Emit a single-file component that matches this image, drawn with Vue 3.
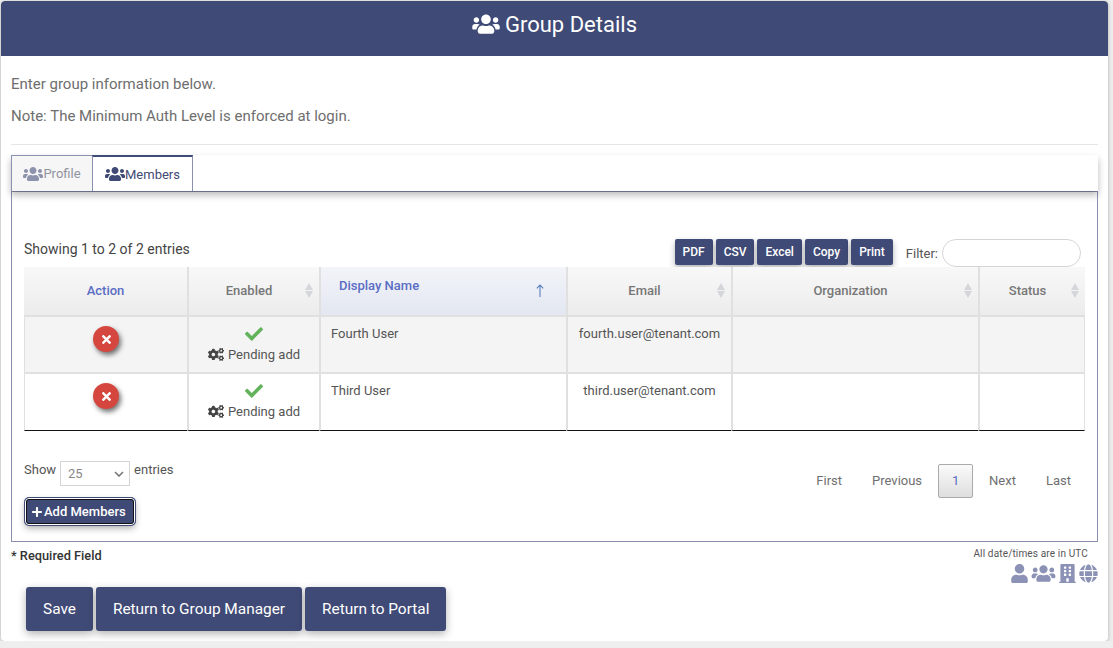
<script setup>
const usersPath = 'M96 224c35.3 0 64-28.7 64-64s-28.7-64-64-64-64 28.7-64 64 28.7 64 64 64zm448 0c35.3 0 64-28.7 64-64s-28.7-64-64-64-64 28.7-64 64 28.7 64 64 64zm32 32h-64c-17.6 0-33.5 7.1-45.1 18.6 40.3 22.1 68.9 62 75.1 109.4h66c17.7 0 32-14.3 32-32v-32c0-35.3-28.7-64-64-64zm-256 0c61.9 0 112-50.1 112-112S381.9 32 320 32 208 82.1 208 144s50.1 112 112 112zm76.8 32h-8.3c-20.8 10-43.9 16-68.5 16s-47.6-6-68.5-16h-8.3C179.6 288 128 339.6 128 403.2V432c0 26.5 21.5 48 48 48h288c26.5 0 48-21.5 48-48v-28.8c0-63.6-51.6-115.2-115.2-115.2zm-223.7-13.4C161.5 263.1 145.6 256 128 256H64c-35.3 0-64 28.7-64 64v32c0 17.7 14.3 32 32 32h65.9c6.3-47.4 34.9-87.3 75.2-109.4z'
const userPath = 'M224 256c70.7 0 128-57.3 128-128S294.7 0 224 0 96 57.3 96 128s57.3 128 128 128zm89.6 32h-16.7c-22.2 10.2-46.9 16-72.9 16s-50.6-5.8-72.9-16h-16.7C60.2 288 0 348.2 0 422.4V464c0 26.5 21.5 48 48 48h352c26.5 0 48-21.5 48-48v-41.6c0-74.2-60.2-134.4-134.4-134.4z'
const checkPath = 'M173.898 439.404l-166.4-166.4c-9.997-9.997-9.997-26.206 0-36.204l36.203-36.204c9.997-9.998 26.207-9.998 36.204 0L192 312.69 432.095 72.596c9.997-9.997 26.207-9.997 36.204 0l36.203 36.204c9.997 9.997 9.997 26.206 0 36.204l-294.4 294.401c-9.998 9.997-26.207 9.997-36.204-.001z'
const timesPath = 'M242.72 256l100.07-100.07c12.28-12.28 12.28-32.19 0-44.48l-22.24-22.24c-12.28-12.28-32.19-12.28-44.48 0L176 189.28 75.93 89.21c-12.28-12.28-32.19-12.28-44.48 0L9.21 111.45c-12.28 12.28-12.28 32.19 0 44.48L109.28 256 9.21 356.07c-12.28 12.28-12.28 32.19 0 44.48l22.24 22.24c12.28 12.28 32.2 12.28 44.48 0L176 322.72l100.07 100.07c12.28 12.28 32.2 12.28 44.48 0l22.24-22.24c12.28-12.28 12.28-32.19 0-44.48L242.72 256z'
const plusPath = 'M416 208H272V64c0-17.67-14.33-32-32-32h-32c-17.67 0-32 14.33-32 32v144H32c-17.67 0-32 14.33-32 32v32c0 17.67 14.33 32 32 32h144v144c0 17.67 14.33 32 32 32h32c17.67 0 32-14.33 32-32V304h144c17.67 0 32-14.33 32-32v-32c0-17.67-14.33-32-32-32z'
const buildingPath = 'M436 480h-20V24c0-13.255-10.745-24-24-24H56C42.745 0 32 10.745 32 24v456H12c-6.627 0-12 5.373-12 12v20h448v-20c0-6.627-5.373-12-12-12zM128 76c0-6.627 5.373-12 12-12h40c6.627 0 12 5.373 12 12v40c0 6.627-5.373 12-12 12h-40c-6.627 0-12-5.373-12-12V76zm0 96c0-6.627 5.373-12 12-12h40c6.627 0 12 5.373 12 12v40c0 6.627-5.373 12-12 12h-40c-6.627 0-12-5.373-12-12v-40zm52 148h-40c-6.627 0-12-5.373-12-12v-40c0-6.627 5.373-12 12-12h40c6.627 0 12 5.373 12 12v40c0 6.627-5.373 12-12 12zm76 160h-64v-84c0-6.627 5.373-12 12-12h40c6.627 0 12 5.373 12 12v84zm64-172c0 6.627-5.373 12-12 12h-40c-6.627 0-12-5.373-12-12v-40c0-6.627 5.373-12 12-12h40c6.627 0 12 5.373 12 12v40zm0-96c0 6.627-5.373 12-12 12h-40c-6.627 0-12-5.373-12-12v-40c0-6.627 5.373-12 12-12h40c6.627 0 12 5.373 12 12v40zm0-96c0 6.627-5.373 12-12 12h-40c-6.627 0-12-5.373-12-12V76c0-6.627 5.373-12 12-12h40c6.627 0 12 5.373 12 12v40z'
const globePath = 'M336.5 160C322 70.7 287.8 8 248 8s-74 62.7-88.5 152h177zM152 256c0 22.2 1.2 43.5 3.3 64h185.3c2.1-20.5 3.3-41.8 3.3-64s-1.2-43.5-3.3-64H155.3c-2.1 20.5-3.3 41.8-3.3 64zm324.7-96c-28.6-67.9-86.5-120.4-158-141.6 24.4 33.8 41.2 84.7 50 141.6h108zM177.2 18.4C105.8 39.6 47.8 92.1 19.3 160h108c8.7-56.9 25.5-107.8 49.9-141.6zM487.4 192H372.7c2.1 21 3.3 42.5 3.3 64s-1.2 43-3.3 64h114.6c5.5-20.5 8.6-41.8 8.6-64s-3.1-43.5-8.5-64zM120 256c0-21.5 1.2-43 3.3-64H8.6C3.2 212.5 0 233.8 0 256s3.2 43.5 8.6 64h114.6c-2-21-3.2-42.5-3.2-64zm39.5 96c14.5 89.3 48.7 152 88.5 152s74-62.7 88.5-152h-177zm159.3 141.6c71.4-21.2 129.4-73.7 158-141.6h-108c-8.8 56.9-25.6 107.8-50 141.6zM19.3 352c28.6 67.9 86.5 120.4 158 141.6-24.4-33.8-41.2-84.7-50-141.6h-108z'
const cogsPath = 'M512.1 191l-8.2 14.3c-3 5.3-9.4 7.5-15.1 5.4-11.8-4.4-22.6-10.7-32.1-18.6-4.6-3.8-5.8-10.5-2.8-15.7l8.2-14.3c-6.9-8-12.3-17.3-15.9-27.4h-16.5c-6 0-11.2-4.3-12.2-10.3-2-12-2.1-24.6 0-37.1 1-6 6.2-10.4 12.2-10.4h16.5c3.6-10.1 9-19.4 15.9-27.4l-8.2-14.3c-3-5.2-1.9-11.9 2.8-15.7 9.5-7.9 20.4-14.2 32.1-18.6 5.7-2.1 12.1.1 15.1 5.4l8.2 14.3c10.5-1.9 21.2-1.9 31.7 0L552 6.3c3-5.3 9.4-7.5 15.1-5.4 11.8 4.4 22.6 10.7 32.1 18.6 4.6 3.8 5.8 10.5 2.8 15.7l-8.2 14.3c6.9 8 12.3 17.3 15.9 27.4h16.5c6 0 11.2 4.3 12.2 10.3 2 12 2.1 24.6 0 37.1-1 6-6.2 10.4-12.2 10.4h-16.5c-3.6 10.1-9 19.4-15.9 27.4l8.2 14.3c3 5.2 1.9 11.9-2.8 15.7-9.5 7.9-20.4 14.2-32.1 18.6-5.7 2.1-12.1-.1-15.1-5.4l-8.2-14.3c-10.4 1.9-21.2 1.9-31.7 0zm-10.5-58.8c38.5 29.6 82.4-14.3 52.8-52.8-38.5-29.7-82.4 14.3-52.8 52.8zM386.3 286.1l33.7 16.8c10.1 5.8 14.5 18.1 10.5 29.1-8.9 24.2-26.4 46.4-42.6 65.8-7.4 8.9-20.2 11.1-30.3 5.3l-29.1-16.8c-16 13.7-34.6 24.6-54.9 31.7v33.6c0 11.6-8.3 21.6-19.7 23.6-24.6 4.2-50.4 4.4-75.9 0-11.5-2-20-11.9-20-23.6V418c-20.3-7.2-38.9-18-54.9-31.7L74 403c-10 5.8-22.9 3.6-30.3-5.3-16.2-19.4-33.3-41.6-42.2-65.7-4-10.9.4-23.2 10.5-29.1l33.3-16.8c-3.9-20.9-3.9-42.4 0-63.4L12 205.8c-10.1-5.8-14.6-18.1-10.5-29 8.9-24.2 26-46.4 42.2-65.8 7.4-8.9 20.2-11.1 30.3-5.3l29.1 16.8c16-13.7 34.6-24.6 54.9-31.7V57.1c0-11.5 8.2-21.5 19.6-23.5 24.6-4.2 50.5-4.4 76-.1 11.5 2 20 11.9 20 23.6v33.6c20.3 7.2 38.9 18 54.9 31.7l29.1-16.8c10-5.8 22.9-3.6 30.3 5.3 16.2 19.4 33.2 41.6 42.1 65.8 4 10.9.1 23.2-10 29.1l-33.7 16.8c3.9 21 3.9 42.5 0 63.5zm-117.6 21.1c59.2-77-28.7-164.9-105.7-105.7-59.2 77 28.7 164.9 105.7 105.7zm243.4 182.7l-8.2 14.3c-3 5.3-9.4 7.5-15.1 5.4-11.8-4.4-22.6-10.7-32.1-18.6-4.6-3.8-5.8-10.5-2.8-15.7l8.2-14.3c-6.9-8-12.3-17.3-15.9-27.4h-16.5c-6 0-11.2-4.3-12.2-10.3-2-12-2.1-24.6 0-37.1 1-6 6.2-10.4 12.2-10.4h16.5c3.6-10.1 9-19.4 15.9-27.4l-8.2-14.3c-3-5.2-1.9-11.9 2.8-15.7 9.5-7.9 20.4-14.2 32.1-18.6 5.7-2.1 12.1.1 15.1 5.4l8.2 14.3c10.5-1.9 21.2-1.9 31.7 0l8.2-14.3c3-5.3 9.4-7.5 15.1-5.4 11.8 4.4 22.6 10.7 32.1 18.6 4.6 3.8 5.8 10.5 2.8 15.7l-8.2 14.3c6.9 8 12.3 17.3 15.9 27.4h16.5c6 0 11.2 4.3 12.2 10.3 2 12 2.1 24.6 0 37.1-1 6-6.2 10.4-12.2 10.4h-16.5c-3.6 10.1-9 19.4-15.9 27.4l8.2 14.3c3 5.2 1.9 11.9-2.8 15.7-9.5 7.9-20.4 14.2-32.1 18.6-5.7 2.1-12.1-.1-15.1-5.4l-8.2-14.3c-10.4 1.9-21.2 1.9-31.7 0zM501.6 431c38.5 29.6 82.4-14.3 52.8-52.8-38.5-29.6-82.4 14.3-52.8 52.8z'

const rows = [
  { name: 'Fourth User', email: 'fourth.user@tenant.com' },
  { name: 'Third User', email: 'third.user@tenant.com' },
]
const exportsList = ['PDF', 'CSV', 'Excel', 'Copy', 'Print']
</script>

<template>
  <div class="card">
    <header class="head">
      <svg class="head-icon" viewBox="0 0 640 512"><path :d="usersPath" /></svg>
      <span>Group Details</span>
    </header>

    <div class="content">
      <p class="intro first">Enter group information below.</p>
      <p class="intro">Note: The Minimum Auth Level is enforced at login.</p>
      <hr class="rule" />

      <nav class="tabs">
        <div class="tab">
          <svg class="tab-icon" viewBox="0 0 640 512"><path :d="usersPath" /></svg>Profile
        </div>
        <div class="tab active">
          <svg class="tab-icon" viewBox="0 0 640 512"><path :d="usersPath" /></svg>Members
        </div>
      </nav>

      <section class="panel">
        <div class="toolbar">
          <div class="info">Showing 1 to 2 of 2 entries</div>
          <div class="exports">
            <button v-for="b in exportsList" :key="b" class="xbtn">{{ b }}</button>
          </div>
          <label class="filter">Filter:<input class="filter-input" type="text" /></label>
        </div>

        <table class="grid">
          <colgroup>
            <col class="c1" /><col class="c2" /><col class="c3" /><col class="c4" /><col class="c5" /><col class="c6" />
          </colgroup>
          <thead>
            <tr>
              <th class="action-h">Action</th>
              <th class="sortable">Enabled
                <svg class="sort" viewBox="0 0 8 15"><path d="M4 0l4 7H0zM0 8h8l-4 7z" /></svg>
              </th>
              <th class="sorted">
                <span class="sorted-label">Display Name</span>
                <svg class="sort-up" viewBox="0 0 10 14"><path d="M5 1v12M1.8 4.4L5 1l3.2 3.4" /></svg>
              </th>
              <th class="sortable">Email
                <svg class="sort" viewBox="0 0 8 15"><path d="M4 0l4 7H0zM0 8h8l-4 7z" /></svg>
              </th>
              <th class="sortable">Organization
                <svg class="sort" viewBox="0 0 8 15"><path d="M4 0l4 7H0zM0 8h8l-4 7z" /></svg>
              </th>
              <th class="sortable">Status
                <svg class="sort" viewBox="0 0 8 15"><path d="M4 0l4 7H0zM0 8h8l-4 7z" /></svg>
              </th>
            </tr>
          </thead>
          <tbody>
            <tr v-for="r in rows" :key="r.email">
              <td class="center">
                <span class="remove">
                  <svg viewBox="0 0 352 512"><path :d="timesPath" /></svg>
                </span>
              </td>
              <td class="center enabled">
                <svg class="check" viewBox="0 0 512 512"><path :d="checkPath" /></svg>
                <div class="pending">
                  <svg class="cogs" viewBox="0 0 640 512"><path :d="cogsPath" /></svg>Pending add
                </div>
              </td>
              <td class="name">{{ r.name }}</td>
              <td class="center email">{{ r.email }}</td>
              <td></td>
              <td></td>
            </tr>
          </tbody>
        </table>

        <div class="below">
          <div class="below-left">
            <div class="length">
              <span>Show</span>
              <span class="select">25
                <svg class="chev" viewBox="0 0 10 6"><path d="M1 1l4 4 4-4" /></svg>
              </span>
              <span>entries</span>
            </div>
            <button class="add">
              <svg class="plus" viewBox="0 0 448 512"><path :d="plusPath" /></svg>Add Members
            </button>
          </div>
          <div class="pager">
            <span class="pg">First</span>
            <span class="pg">Previous</span>
            <span class="pg current">1</span>
            <span class="pg">Next</span>
            <span class="pg">Last</span>
          </div>
        </div>
      </section>

      <div class="foot">
        <div class="foot-left">
          <div class="required">* Required Field</div>
          <div class="actions">
            <button class="act">Save</button>
            <button class="act">Return to Group Manager</button>
            <button class="act">Return to Portal</button>
          </div>
        </div>
        <div class="foot-right">
          <div class="utc">All date/times are in UTC</div>
          <div class="legend">
            <svg class="l-user" viewBox="0 0 448 512"><path :d="userPath" /></svg>
            <svg class="l-users" viewBox="0 0 640 512"><path :d="usersPath" /></svg>
            <svg class="l-building" viewBox="0 0 448 512"><path :d="buildingPath" /></svg>
            <svg class="l-globe" viewBox="0 0 496 512"><path :d="globePath" /></svg>
          </div>
        </div>
      </div>
    </div>
  </div>
</template>

<style>
html, body { margin: 0; background: #eeeeee; }
</style>

<style scoped>
.card {
  box-sizing: border-box;
  width: 1107px;
  height: 640px;
  margin: 1px 0 0 1px;
  background: #fff;
  border-radius: 4px;
  box-shadow: 0 1px 4px rgba(0, 0, 0, 0.25);
  font-family: Roboto, sans-serif;
  overflow: hidden;
}
.head {
  height: 55px;
  background: #3f4a76;
  color: #fff;
  font-size: 22px;
  display: flex;
  align-items: center;
  justify-content: center;
  gap: 5px;
  border-radius: 3px 3px 0 0;
  padding-bottom: 9px;
  box-sizing: border-box;
}
.head-icon { width: 28px; height: 22px; fill: #fff; }
.content { padding: 0 10px; }
.intro { margin: 0 0 13px; font-size: 15px; line-height: 19px; color: #6e6e6e; }
.intro.first { margin-top: 19px; }
.rule { border: 0; border-top: 1px solid #e6e6e6; margin: 18px 0 10px; }
.tabs {
  display: flex;
  height: 36px;
  background: #fff;
  box-shadow: 0 4px 7px rgba(0, 0, 0, 0.28);
  position: relative;
  z-index: 1;
}
.tab {
  box-sizing: border-box;
  width: 81px;
  display: flex;
  align-items: center;
  justify-content: center;
  font-size: 13px;
  color: #90939e;
  background: #f6f6f6;
  border: 1px solid #8a90b0;
  border-width: 1px 0 0 1px;
}
.tab.active {
  width: 101px;
  background: #fff;
  color: #3f4a76;
  border: 1px solid #8a90b0;
  border-top: 2px solid #3f4a76;
  border-bottom: 0;
}
.tab-icon { width: 20px; height: 16px; fill: #8d93ad; }
.tab.active .tab-icon { fill: #3f4a76; }
.panel {
  box-sizing: border-box;
  height: 351px;
  border: 1px solid #8a90b0;
  padding: 47px 12px 0;
}
.toolbar { display: flex; align-items: flex-start; height: 28px; }
.info { font-size: 14px; color: #444; line-height: 20px; flex: 1; }
.exports { display: flex; gap: 3px; }
.xbtn {
  height: 26px;
  padding: 0 8px;
  border: 0;
  border-radius: 2px;
  background: #3f4a76;
  color: #fff;
  font: 500 12px Roboto, sans-serif;
  box-shadow: 0 3px 6px rgba(0, 0, 0, 0.3);
}
.filter { display: flex; align-items: center; font-size: 13px; color: #555; margin-left: 13px; margin-right: 4px; height: 28px; gap: 4px; }
.filter-input {
  box-sizing: border-box;
  width: 139px;
  height: 28px;
  border: 1px solid #d5d5d5;
  border-radius: 14px;
  background: #fff;
  outline: none;
}
.grid {
  table-layout: fixed;
  width: 1061px;
  border-collapse: separate;
  border-spacing: 0;
  font-size: 13px;
  color: #555;
}
.c1 { width: 163px; }
.c2 { width: 132px; }
.c3 { width: 247px; }
.c4 { width: 165px; }
.c5 { width: 247px; }
.c6 { width: 107px; }
th {
  position: relative;
  box-sizing: border-box;
  height: 50px;
  padding: 0 0 2px;
  font-weight: 500;
  font-size: 13px;
  color: #777;
  background: linear-gradient(#f8f8f8, #ececec);
  border-left: 2px solid #e0e0e0;
  border-bottom: 2px solid #e0e0e0;
}
th:first-child { border-left: 0; }
.action-h { color: #5a6dc4; }
.sortable { padding-right: 10px; }
.sort { position: absolute; right: 6px; top: 16px; width: 8px; height: 15px; fill: #d4d6da; }
.sorted {
  background: linear-gradient(#f2f4f9, #e3e7f1);
  text-align: left;
  vertical-align: top;
  padding: 11px 0 0 18px;
}
.sorted-label { color: #5a6dc4; }
.sort-up {
  position: absolute;
  right: 21px;
  top: 17px;
  width: 10px;
  height: 14px;
  fill: none;
  stroke: #5a7fb8;
  stroke-width: 1.1;
}
td {
  box-sizing: border-box;
  height: 57px;
  padding: 8px 10px 0;
  vertical-align: top;
  border-left: 2px solid #e0e0e0;
  border-bottom: 2px solid #e0e0e0;
  line-height: 17px;
}
tbody tr:nth-child(1) td { background: #f4f4f4; }
tbody tr:nth-child(2) td { height: 57px; border-bottom: 1px solid #111; }
td:first-child { border-left: 1px solid #e0e0e0; }
td:last-child { border-right: 1px solid #e0e0e0; }
.center { text-align: center; }
.email { padding-left: 0; padding-right: 0; }
.remove {
  display: inline-flex;
  align-items: center;
  justify-content: center;
  width: 26px;
  height: 26px;
  margin-top: 1px;
  border-radius: 50%;
  background: #d5463e;
  box-shadow: 2px 3px 5px rgba(0, 0, 0, 0.55);
}
.remove svg { width: 9px; height: 13px; fill: #fff; }
.enabled { padding: 0; }
.check { display: block; width: 18px; height: 18px; margin: 8px auto 0; fill: #62b35c; }
.pending { display: flex; align-items: center; justify-content: center; margin-top: 3px; gap: 4px; }
.cogs { width: 16px; height: 13px; fill: #444; }
.below { display: flex; justify-content: space-between; }
.below-left { padding-top: 30px; }
.length { display: flex; align-items: flex-start; gap: 4px; font-size: 13px; color: #555; line-height: 18px; }
.select {
  box-sizing: border-box;
  position: relative;
  width: 70px;
  height: 25px;
  border: 1px solid #d5d5d5;
  padding: 3px 7px;
  color: #888;
}
.chev { position: absolute; right: 5px; top: 9px; width: 10px; height: 6px; fill: none; stroke: #777; stroke-width: 1.6; }
.add {
  display: flex;
  align-items: center;
  box-sizing: border-box;
  height: 27px;
  width: 110px;
  margin: 12px 0 0 1px;
  padding: 0 6px;
  background: #3f4a76;
  color: #fff;
  font: 500 13px Roboto, sans-serif;
  border: 1px solid #fff;
  border-radius: 4px;
  outline: 1px solid #111;
  outline-offset: -2px;
  box-shadow: 0 0 0 1px #3f4a76, 0 3px 7px rgba(0, 0, 0, 0.35);
}
.plus { width: 10px; height: 12px; fill: #fff; margin-right: 2px; }
.pager { display: flex; align-items: center; gap: 2px; height: 34px; margin-top: 33px; }
.pg {
  box-sizing: border-box;
  height: 34px;
  padding: 0 14px 2px;
  display: flex;
  align-items: center;
  font-size: 13px;
  color: #6f6f6f;
}
.pg.current {
  width: 35px;
  padding: 0 0 2px;
  justify-content: center;
  color: #5a6dc4;
  border: 1px solid #aaa;
  border-radius: 2px;
  background: linear-gradient(#fafafa, #dedede);
}
.foot { display: flex; justify-content: space-between; }
.required { font-size: 12.8px; font-weight: 500; color: #333; margin-top: 6px; line-height: 15px; }
.actions { display: flex; gap: 3px; margin: 24px 0 0 15px; }
.act {
  height: 44px;
  padding: 0 17px;
  border: 0;
  border-radius: 3px;
  background: #3f4a76;
  color: #fff;
  font: 400 15.4px Roboto, sans-serif;
  box-shadow: 0 3px 8px rgba(0, 0, 0, 0.3);
}
.foot-right { display: flex; flex-direction: column; align-items: flex-end; }
.utc { font-size: 10px; color: #555; margin: 6px 10px 0 0; line-height: 12px; letter-spacing: 0.15px; }
.legend { display: flex; align-items: center; gap: 3px; margin-top: 4px; }
.legend svg { fill: #8b92b5; height: 19px; }
.l-user { width: 17px; }
.l-users { width: 25px; }
.l-building { width: 17px; }
.l-globe { width: 19px; }
</style>
